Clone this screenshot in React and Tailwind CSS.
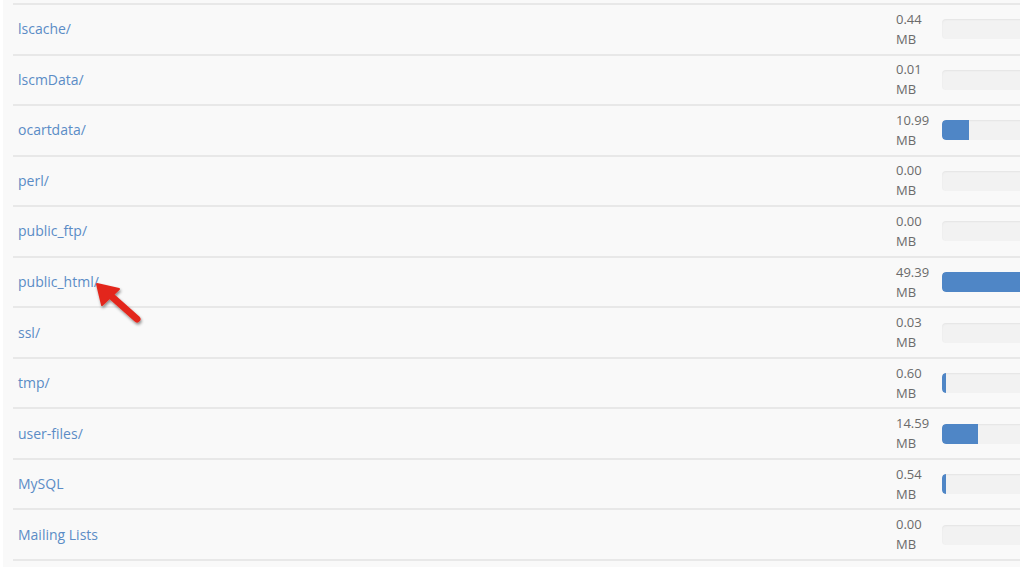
const rows = [
  { name: 'lscache/', size: '0.44', fill: 0 },
  { name: 'lscmData/', size: '0.01', fill: 0 },
  { name: 'ocartdata/', size: '10.99', fill: 27 },
  { name: 'perl/', size: '0.00', fill: 0 },
  { name: 'public_ftp/', size: '0.00', fill: 0 },
  { name: 'public_html/', size: '49.39', fill: 118, arrow: true },
  { name: 'ssl/', size: '0.03', fill: 0 },
  { name: 'tmp/', size: '0.60', fill: 4 },
  { name: 'user-files/', size: '14.59', fill: 36 },
  { name: 'MySQL', size: '0.54', fill: 4 },
  { name: 'Mailing Lists', size: '0.00', fill: 0 },
]

function Arrow() {
  return (
    <svg className="absolute left-[79px] top-[12px]" width="56" height="50" viewBox="0 0 56 50">
      <defs>
        <filter id="sh" x="-30%" y="-30%" width="160%" height="160%">
          <feDropShadow dx="1" dy="2" stdDeviation="1.5" floodColor="#000" floodOpacity="0.45" />
        </filter>
      </defs>
      <g filter="url(#sh)">
        <path d="M45 38 L18 14" stroke="#e3271c" strokeWidth="7" strokeLinecap="round" />
        <path d="M5 3 L27 8 L10 24 Z" fill="#e3271c" stroke="#e3271c" strokeWidth="2" strokeLinejoin="round" />
      </g>
    </svg>
  )
}

function Row({ row }) {
  return (
    <div className="h-[50.55px] border-b-2 border-[#e8e8e8] flex items-center relative">
      <div className="flex-1 pl-[5px] pb-[2px] relative">
        <a className="text-[14px] text-[#5b8cc6] leading-5">{row.name}</a>
        {row.arrow && <Arrow />}
      </div>
      <div className="w-[46px] text-[13px] leading-[20px] text-[#6b6b6b] pb-[1px]">
        <div>{row.size}</div>
        <div>MB</div>
      </div>
      <div className="w-[78px] overflow-hidden">
        <div className="w-[118px] h-[20px] rounded-[4px] bg-[#f2f2f2] shadow-[inset_0_1px_2px_rgba(0,0,0,0.06)] overflow-hidden">
          {row.fill > 0 && (
            <div className="h-full bg-[#4f86c6] rounded-l-[4px]" style={{ width: row.fill }} />
          )}
        </div>
      </div>
    </div>
  )
}

export default function App() {
  return (
    <div className="w-[1024px] h-[571px] bg-white overflow-hidden" style={{ fontFamily: '"Open Sans", "Noto Sans", sans-serif' }}>
      <div className="ml-[3px] w-[1017px] h-[567px] bg-[#f9f9f9] pl-[10px] pt-[3px] overflow-hidden">
        <div className="border-t-2 border-[#e8e8e8]">
          {rows.map(r => <Row key={r.name} row={r} />)}
        </div>
      </div>
    </div>
  )
}
